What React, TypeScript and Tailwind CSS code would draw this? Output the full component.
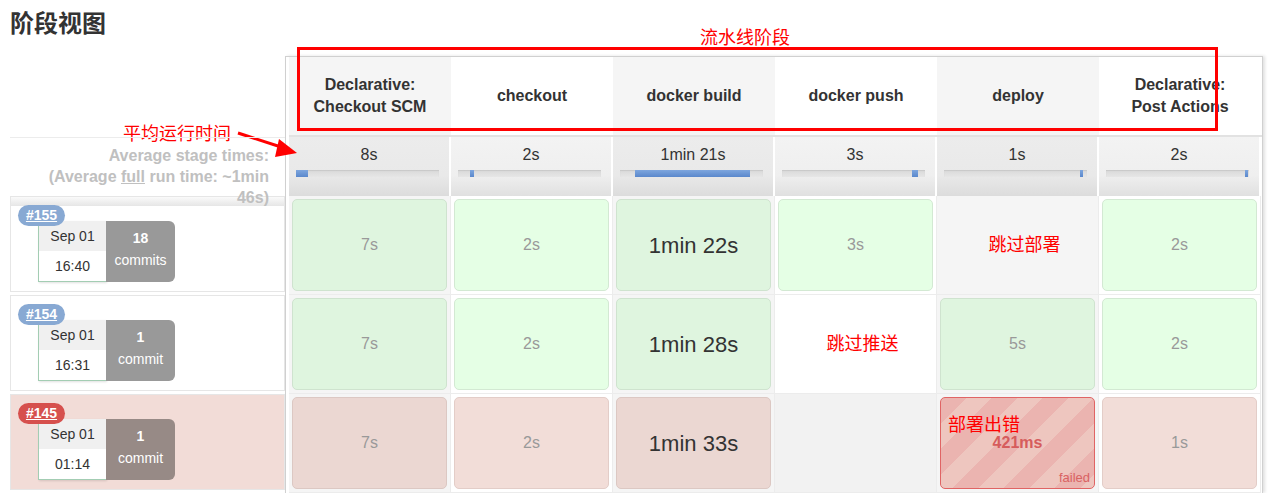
import React from "react";

type Cell =
  | { kind: "ok"; text: string }
  | { kind: "long"; text: string }
  | { kind: "skip"; text: string }
  | { kind: "empty" }
  | { kind: "fail"; text: string };

type Run = {
  id: string;
  date: string;
  time: string;
  count: string;
  label: string;
  failed: boolean;
  cells: Cell[];
};

const stages = [
  { name: ["Declarative:", "Checkout SCM"], avg: "8s", off: 0, w: 12 },
  { name: ["checkout"], avg: "2s", off: 12, w: 4 },
  { name: ["docker build"], avg: "1min 21s", off: 15, w: 115 },
  { name: ["docker push"], avg: "3s", off: 130, w: 6 },
  { name: ["deploy"], avg: "1s", off: 136, w: 3 },
  { name: ["Declarative:", "Post Actions"], avg: "2s", off: 139, w: 3 },
];

const runs: Run[] = [
  {
    id: "#155",
    date: "Sep 01",
    time: "16:40",
    count: "18",
    label: "commits",
    failed: false,
    cells: [
      { kind: "ok", text: "7s" },
      { kind: "ok", text: "2s" },
      { kind: "long", text: "1min 22s" },
      { kind: "ok", text: "3s" },
      { kind: "skip", text: "跳过部署" },
      { kind: "ok", text: "2s" },
    ],
  },
  {
    id: "#154",
    date: "Sep 01",
    time: "16:31",
    count: "1",
    label: "commit",
    failed: false,
    cells: [
      { kind: "ok", text: "7s" },
      { kind: "ok", text: "2s" },
      { kind: "long", text: "1min 28s" },
      { kind: "skip", text: "跳过推送" },
      { kind: "ok", text: "5s" },
      { kind: "ok", text: "2s" },
    ],
  },
  {
    id: "#145",
    date: "Sep 01",
    time: "01:14",
    count: "1",
    label: "commit",
    failed: true,
    cells: [
      { kind: "ok", text: "7s" },
      { kind: "ok", text: "2s" },
      { kind: "long", text: "1min 33s" },
      { kind: "empty" },
      { kind: "fail", text: "421ms" },
      { kind: "ok", text: "1s" },
    ],
  },
];

const StageCell = ({ cell, col, failed }: { cell: Cell; col: number; failed: boolean }) => {
  const gray = col % 2 === 0;
  const cellBg = gray ? "bg-[#f5f5f5]" : "bg-white";

  if (cell.kind === "empty") {
    return <div className="border-r border-b border-[#ececec] bg-[#f2f2f2]" />;
  }
  if (cell.kind === "skip") {
    return (
      <div className={`flex items-center justify-center border-r border-b border-[#ececec] pl-[14px] ${cellBg}`}>
        <span className="text-[18px] leading-[22px] text-[#ff0000]">{cell.text}</span>
      </div>
    );
  }
  if (cell.kind === "fail") {
    return (
      <div className={`border-r border-b border-[#ececec] p-[3px] ${cellBg}`}>
        <div className="relative flex h-full items-center justify-center rounded-[5px] border border-[#e06464] bg-[repeating-linear-gradient(135deg,#ebb4b0_0px,#ebb4b0_18px,#eec6bf_18px,#eec6bf_36px)]">
          <span className="text-[16px] font-bold text-[#d65c5c]">{cell.text}</span>
          <span className="absolute left-[7px] top-[16px] text-[18px] leading-[22px] text-[#ff0000]">部署出错</span>
          <span className="absolute bottom-[3px] right-[4px] text-[13px] leading-[15px] text-[#d96262]">failed</span>
        </div>
      </div>
    );
  }

  let box = "";
  if (failed) {
    box = gray ? "bg-[#ebd7d2] border-[#dcc8c3]" : "bg-[#f2ddd8] border-[#e3cdc8]";
  } else {
    box = gray ? "bg-[#dff5df] border-[#cfe3cf]" : "bg-[#e5ffe5] border-[#d3e9d3]";
  }
  const txt = cell.kind === "long" ? "text-[22px] text-[#333]" : "text-[16px] text-[#999]";

  return (
    <div className={`border-r border-b border-[#ececec] p-[3px] ${cellBg}`}>
      <div className={`flex h-full items-center justify-center rounded-[5px] border ${box}`}>
        <span className={txt}>{cell.text}</span>
      </div>
    </div>
  );
};

const RunHead = ({ run, first }: { run: Run; first: boolean }) => {
  let bg = run.failed ? "bg-[#f2dcd7]" : "bg-white";
  if (first) bg = "bg-[linear-gradient(to_bottom,#fafafa_0px,#e6e6e6_9px,#ffffff_9px)]";
  return (
    <div className={`relative mb-[3px] h-[96px] border border-[#e6e6e6] ${bg}`}>
      <div
        className={`absolute left-[7px] top-[8px] z-10 flex h-[21px] w-[47px] items-center justify-center rounded-full text-[14px] font-bold text-white underline ${
          run.failed ? "bg-[#d6504d]" : "bg-[#88a9d3]"
        }`}
      >
        {run.id}
      </div>
      <div className="absolute left-[27px] top-[24px] flex h-[61px]">
        <div className="flex w-[68px] flex-col border-b border-l border-[#a3cdb3] shadow-[1px_1px_2px_rgba(0,0,0,0.12)]">
          <div className="flex h-[30px] items-center justify-center bg-[#f0f0f0] text-[14px]">{run.date}</div>
          <div className="flex flex-1 items-center justify-center bg-white text-[14px]">{run.time}</div>
        </div>
        <div
          className={`flex w-[69px] flex-col items-center justify-center rounded-r-[6px] pb-[6px] text-[14px] leading-[22px] text-white ${
            run.failed ? "bg-[#978a86]" : "bg-[#999999]"
          }`}
        >
          <span className="font-bold">{run.count}</span>
          <span>{run.label}</span>
        </div>
      </div>
    </div>
  );
};

export default function App() {
  return (
    <div className="relative h-[493px] w-[1272px] overflow-hidden bg-white pl-[10px] font-['Liberation_Sans','Noto_Sans_CJK_SC',sans-serif] text-[#333]">
      <h2 className="h-[56px] pt-[10px] text-[24px] font-bold leading-[28px]">阶段视图</h2>

      <div className="flex">
        <div className="w-[275px]">
          <div className="h-[81px]" />
          <div className="relative z-20 h-[59px] border-t border-[#ececec] pl-4 pr-4 pt-[7px] text-right text-[16px] font-bold leading-[21px] text-[#c0c0c0]">
            Average stage times:
            <br />
            (Average <span className="underline">full</span> run time: ~1min 46s)
          </div>
          {runs.map((r, i) => (
            <RunHead key={r.id} run={r} first={i === 0} />
          ))}
        </div>

        <div className="w-[978px] border-l border-r border-t border-[#d0d0d0] pl-[3px] shadow-[2px_0_3px_rgba(0,0,0,0.12)]">
          <div className="grid h-[78px] grid-cols-[repeat(6,162px)]">
            {stages.map((s, i) => (
              <div
                key={i}
                className={`flex flex-col items-center justify-center text-center text-[16px] font-bold leading-[22px] ${
                  i % 2 === 0 ? "bg-[#f5f5f5]" : "bg-white"
                }`}
              >
                {s.name.map((n) => (
                  <span key={n}>{n}</span>
                ))}
              </div>
            ))}
          </div>

          <div className="grid h-[61px] grid-cols-[repeat(6,162px)] border-t-2 border-[#e2e2e2]">
            {stages.map((s, i) => (
              <div
                key={i}
                className={`mr-[2px] flex flex-col items-center pt-[8px] ${
                  i % 2 === 0
                    ? "bg-[linear-gradient(to_bottom,#ececec,#e9e9e9_65%,#dcdcdc)]"
                    : "bg-[linear-gradient(to_bottom,#f3f3f3,#efefef_65%,#e0e0e0)]"
                }`}
              >
                <span className="text-[16px] leading-[20px]">{s.avg}</span>
                <div className="relative mt-[5px] ml-[7px] h-[7px] w-[143px] self-start bg-[linear-gradient(to_bottom,#d9d9d9,#e6e6e6)] shadow-[inset_0_1px_1px_rgba(0,0,0,0.08)]">
                  <div
                    className="absolute top-0 h-[7px] bg-[linear-gradient(to_bottom,#7ea6de,#5a88cc)]"
                    style={{ left: s.off, width: s.w }}
                  />
                </div>
              </div>
            ))}
          </div>

          {runs.map((r) => (
            <div key={r.id} className="grid h-[99px] grid-cols-[repeat(6,162px)]">
              {r.cells.map((c, i) => (
                <StageCell key={i} cell={c} col={i} failed={r.failed} />
              ))}
            </div>
          ))}
        </div>
      </div>

      {/* annotations */}
      <div className="absolute left-[297px] top-[47px] h-[84px] w-[921px] border-[3px] border-[#ff0000]" />
      <span className="absolute left-[700px] top-[27px] text-[18px] leading-[22px] text-[#ff0000]">流水线阶段</span>
      <span className="absolute left-[123px] top-[123px] text-[18px] leading-[22px] text-[#ff0000]">平均运行时间</span>
      <svg className="absolute left-0 top-0" width="320" height="200">
        <line x1="238" y1="133" x2="281" y2="147" stroke="#ff0000" strokeWidth="3" />
        <polygon points="297,153 279,139 275,157" fill="#ff0000" />
      </svg>
    </div>
  );
}
